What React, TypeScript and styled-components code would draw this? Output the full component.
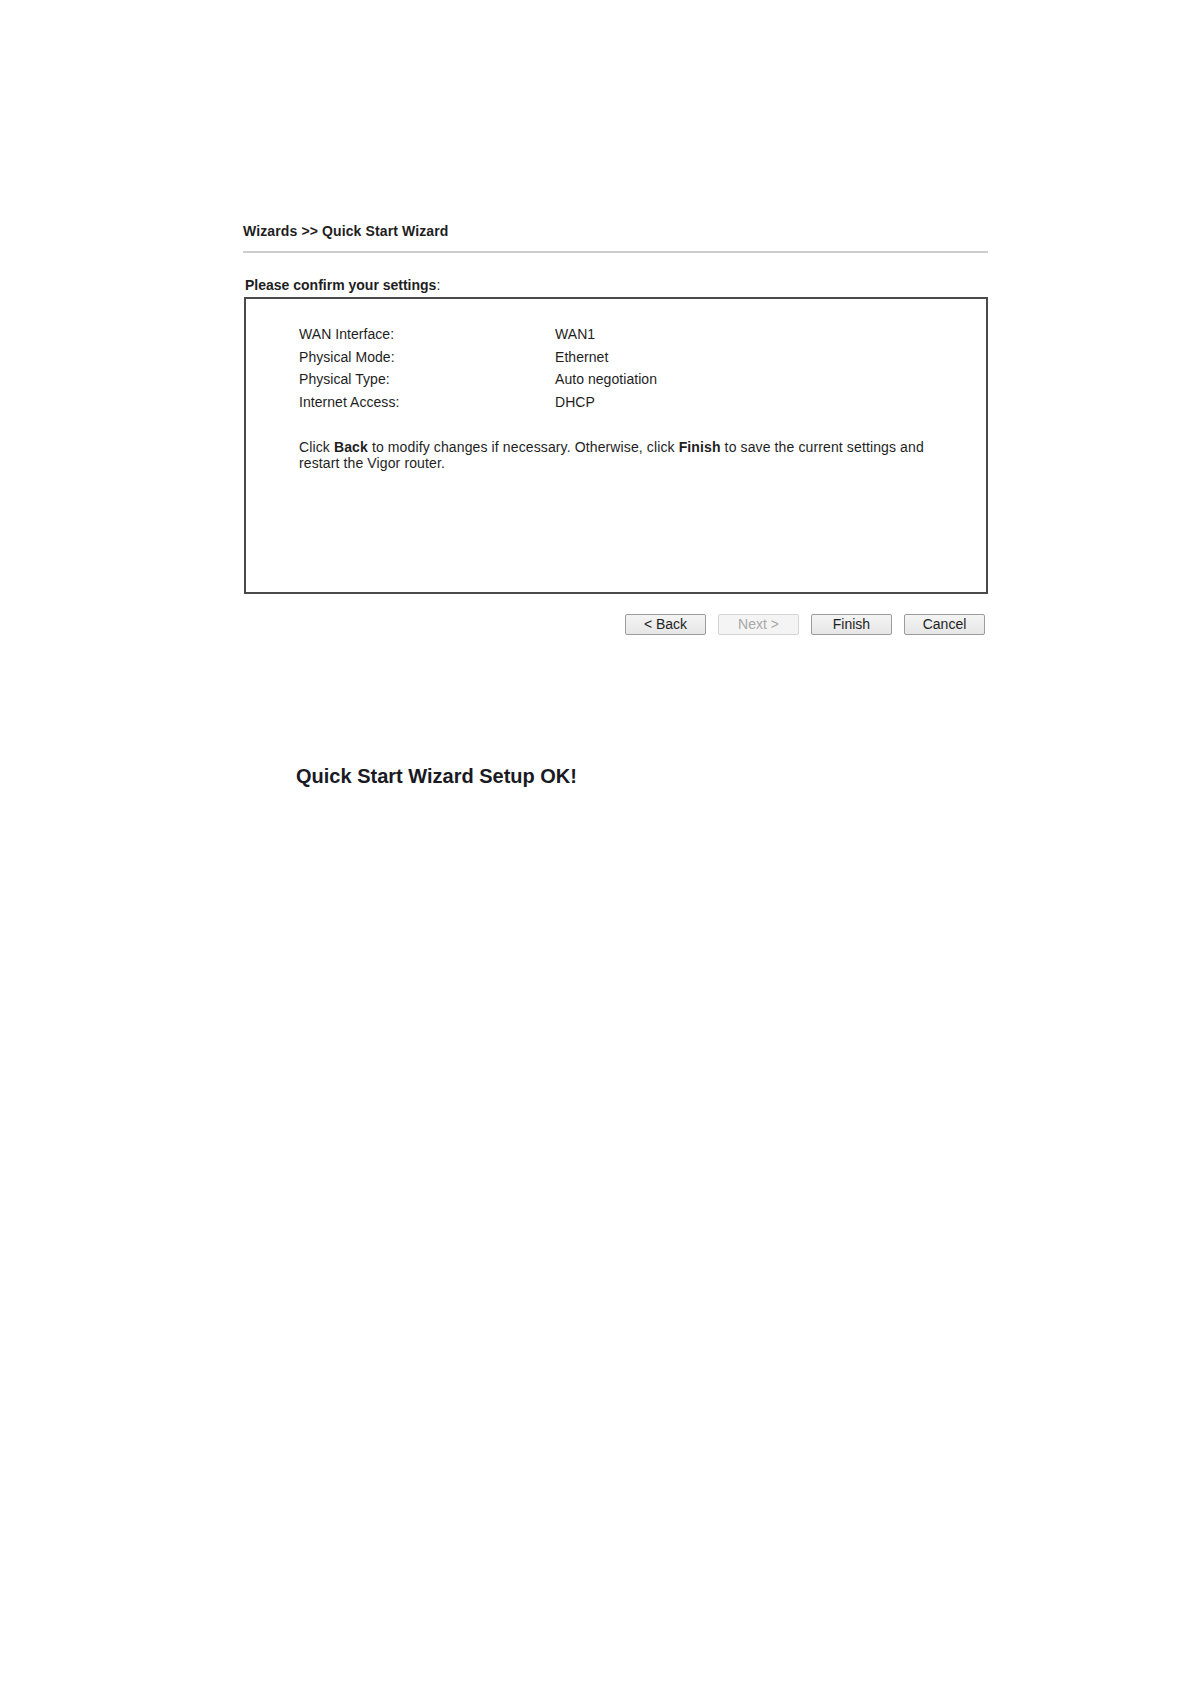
import React from 'react';
import styled, { createGlobalStyle } from 'styled-components';

const GlobalStyle = createGlobalStyle`
  html, body {
    margin: 0;
    padding: 0;
    background: #ffffff;
  }
  body {
    font-family: "Liberation Sans", Arial, sans-serif;
    color: #1e1e1e;
  }
`;

const Page = styled.div`
  width: 745px;
  padding: 223px 0 0 243px;
`;

const Header = styled.div`
  font-size: 14px;
  font-weight: bold;
  line-height: 17px;
  letter-spacing: 0.12px;
  padding-bottom: 11px;
  border-bottom: 2px solid #cdcdcd;
`;

const SectionTitle = styled.div`
  margin: 24px 0 4px 2px;
  font-size: 14px;
  line-height: 16px;
  font-weight: bold;

  span {
    font-weight: normal;
  }
`;

const ConfirmBox = styled.div`
  box-sizing: border-box;
  height: 297px;
  margin-left: 1px;
  border: 2px solid #4a4a4a;
  padding: 24px 30px 0 53px;
`;

const SettingsTable = styled.div`
  display: grid;
  grid-template-columns: 256px 1fr;
  font-size: 14px;
  line-height: 22.6px;
  letter-spacing: 0.05px;
`;

const Note = styled.p`
  margin: 26px 0 0;
  font-size: 14px;
  line-height: 16px;
  letter-spacing: 0.12px;

  b {
    font-weight: bold;
  }
`;

const ButtonBar = styled.div`
  display: flex;
  justify-content: flex-end;
  gap: 12px;
  margin-top: 20px;
  padding-right: 3px;
`;

const Button = styled.button<{ $disabled?: boolean }>`
  box-sizing: border-box;
  width: 81px;
  height: 21px;
  padding: 0;
  font-family: "Liberation Sans", Arial, sans-serif;
  font-size: 14px;
  line-height: 19px;
  border-radius: 2px;
  color: ${p => (p.$disabled ? '#a8a8a8' : '#1e1e1e')};
  border: 1px solid ${p => (p.$disabled ? '#d4d4d4' : '#9c9c9c')};
  background: ${p =>
    p.$disabled ? '#f4f4f4' : 'linear-gradient(#f4f4f4, #e6e6e6)'};
`;

const SuccessText = styled.div`
  margin: 129px 0 0 53px;
  font-size: 20px;
  line-height: 24px;
  font-weight: bold;
  color: #1a1a24;
`;

const settings: [string, string][] = [
  ['WAN Interface:', 'WAN1'],
  ['Physical Mode:', 'Ethernet'],
  ['Physical Type:', 'Auto negotiation'],
  ['Internet Access:', 'DHCP'],
];

export default function App() {
  return (
    <>
      <GlobalStyle />
      <Page>
        <Header>Wizards &gt;&gt; Quick Start Wizard</Header>
        <SectionTitle>
          Please confirm your settings<span>:</span>
        </SectionTitle>
        <ConfirmBox>
          <SettingsTable>
            {settings.map(([label, value]) => (
              <React.Fragment key={label}>
                <div>{label}</div>
                <div>{value}</div>
              </React.Fragment>
            ))}
          </SettingsTable>
          <Note>
            Click <b>Back</b> to modify changes if necessary. Otherwise, click <b>Finish</b> to
            save the current settings and restart the Vigor router.
          </Note>
        </ConfirmBox>
        <ButtonBar>
          <Button>&lt; Back</Button>
          <Button $disabled disabled>
            Next &gt;
          </Button>
          <Button>Finish</Button>
          <Button>Cancel</Button>
        </ButtonBar>
        <SuccessText>Quick Start Wizard Setup OK!</SuccessText>
      </Page>
    </>
  );
}
